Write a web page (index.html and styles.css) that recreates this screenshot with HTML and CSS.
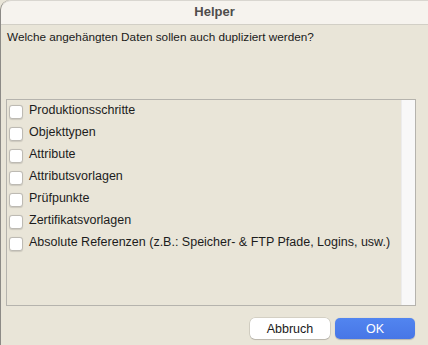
FILE: index.html
```html
<!DOCTYPE html>
<html>
<head>
<meta charset="utf-8">
<link rel="stylesheet" href="styles.css">
</head>
<body>
<div class="window">
  <div class="titlebar">Helper</div>
  <div class="content">
    <div class="prompt">Welche angehängten Daten sollen auch dupliziert werden?</div>
    <div class="listbox">
      <div class="items">
        <label class="row"><span class="cb"></span><span>Produktionsschritte</span></label>
        <label class="row"><span class="cb"></span><span>Objekttypen</span></label>
        <label class="row"><span class="cb"></span><span>Attribute</span></label>
        <label class="row"><span class="cb"></span><span>Attributsvorlagen</span></label>
        <label class="row"><span class="cb"></span><span>Prüfpunkte</span></label>
        <label class="row"><span class="cb"></span><span>Zertifikatsvorlagen</span></label>
        <label class="row"><span class="cb"></span><span>Absolute Referenzen (z.B.: Speicher- &amp; FTP Pfade, Logins, usw.)</span></label>
      </div>
      <div class="scrolltrack"></div>
    </div>
    <div class="buttons">
      <button class="btn">Abbruch</button>
      <button class="btn primary">OK</button>
    </div>
  </div>
</div>
</body>
</html>
```

FILE: styles.css
```css
html, body {
  margin: 0;
  padding: 0;
  background: #e9e5d8;
}
body {
  font-family: "Liberation Sans", Arial, sans-serif;
  font-size: 12px;
  color: #1a1a1a;
}
.window {
  width: 427px;
  height: 345px;
  border-left: 1px solid #8c8a86;
  border-top-left-radius: 10px;
  background: #e9e5d8;
  overflow: hidden;
  display: flex;
  flex-direction: column;
}
.titlebar {
  height: 23px;
  line-height: 22px;
  text-align: center;
  font-weight: bold;
  font-size: 13px;
  color: #4f4d4b;
  background: #f6f3ee;
  border-bottom: 1px solid #d2cfc6;
  border-top: 1px solid #d9d6d0;
  border-top-left-radius: 10px;
}
.content {
  padding: 4px 12px 0 5px;
  display: flex;
  flex-direction: column;
}
.prompt {
  line-height: 15px;
  padding-left: 1px;
  font-size: 11.75px;
}
.listbox {
  margin-top: 55px;
  height: 205px;
  border: 1px solid #b5b3ad;
  display: flex;
}
.items {
  flex: 1;
  padding-left: 2px;
}
.row {
  display: flex;
  align-items: center;
  height: 22px;
  gap: 6px;
  color: #1c1c1c;
  font-size: 12.5px;
  line-height: 15px;
}
.row span:last-child {
  margin-top: -2px;
}
.cb {
  width: 12px;
  height: 12px;
  border: 0.5px solid #bdbab3;
  border-radius: 3px;
  background: #ffffff;
  box-shadow: 0 0.5px 1px rgba(0,0,0,0.12);
  margin-top: 1px;
}
.scrolltrack {
  width: 13px;
  background: #f8f8f8;
  border-left: 1px solid #ececec;
}
.buttons {
  display: flex;
  justify-content: flex-end;
  gap: 5px;
  margin-top: 12px;
  padding-right: 1px;
}
.btn {
  width: 80px;
  height: 21px;
  border: none;
  border-radius: 5px;
  background: #ffffff;
  box-shadow: 0 0 0 0.5px rgba(0,0,0,0.18), 0 1px 1px rgba(0,0,0,0.12);
  font-family: "Liberation Sans", Arial, sans-serif;
  font-size: 12.5px;
  color: #1a1a1a;
  padding: 0;
}
.btn.primary {
  background: linear-gradient(#5285f0, #4776e6);
  color: #ffffff;
  box-shadow: 0 0.5px 1px rgba(0,0,0,0.2);
}
```
